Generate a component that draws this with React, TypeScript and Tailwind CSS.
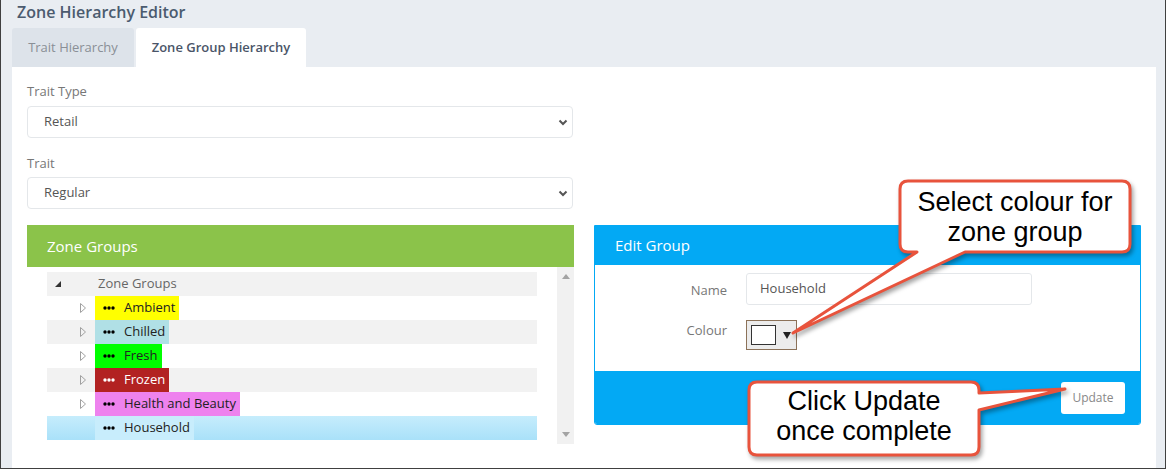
import React from 'react';

const Dots: React.FC<{ color?: string }> = ({ color = '#000' }) => (
  <svg width="12" height="4" viewBox="0 0 12 4" className="shrink-0">
    <circle cx="2" cy="2" r="1.7" fill={color} />
    <circle cx="6" cy="2" r="1.7" fill={color} />
    <circle cx="10" cy="2" r="1.7" fill={color} />
  </svg>
);

const Chevron: React.FC = () => (
  <svg width="10" height="7" viewBox="0 0 10 7" className="shrink-0">
    <path d="M1.5 1.5 L5 5 L8.5 1.5" fill="none" stroke="#555" strokeWidth="2" />
  </svg>
);

const groups = [
  { name: 'Ambient', bg: 'bg-[#ffff00]', text: 'text-[#222]', dots: '#000' },
  { name: 'Chilled', bg: 'bg-[#b0e0e6]', text: 'text-[#222]', dots: '#000' },
  { name: 'Fresh', bg: 'bg-[#00ff00]', text: 'text-[#222]', dots: '#000' },
  { name: 'Frozen', bg: 'bg-[#b22222]', text: 'text-white', dots: '#fff' },
  { name: 'Health and Beauty', bg: 'bg-[#ee82ee]', text: 'text-[#222]', dots: '#000' },
];

const App: React.FC = () => {
  return (
    <div className="relative w-[1167px] h-[470px] bg-white overflow-hidden font-['Open_Sans',sans-serif]">
      <div className="w-[1166px] h-[469px] border-l border-r border-b border-[#404040] bg-[#e9edf2] flex flex-col">
        {/* Title */}
        <div className="h-[28px] pl-[16px] pt-[1px] text-[16px] leading-[22px] font-semibold text-[#4b5b6f]">
          Zone Hierarchy Editor
        </div>

        {/* Tabs */}
        <div className="flex pl-[11px] gap-[2px] h-[39px]">
          <div className="w-[122px] flex items-center justify-center rounded-t-[3px] bg-[#dde3ea] text-[13px] text-[#8a8f96]">
            Trait Hierarchy
          </div>
          <div className="w-[170px] flex items-center justify-center rounded-t-[3px] bg-white text-[13px] font-semibold text-[#4a5568]">
            Zone Group Hierarchy
          </div>
        </div>

        {/* Content */}
        <div className="flex-1 ml-[11px] w-[1144px] bg-white pl-[15px] pt-[14px]">
          <div className="text-[13px] leading-[20px] text-[#777]">Trait Type</div>
          <div className="mt-[5px] w-[546px] h-[32px] border border-[#e4e7ea] rounded-[4px] flex items-center justify-between pl-[16px] pr-[4px] text-[13px] text-[#555]">
            <span>Retail</span>
            <Chevron />
          </div>
          <div className="mt-[15px] text-[13px] leading-[20px] text-[#777]">Trait</div>
          <div className="mt-[4px] w-[546px] h-[32px] border border-[#e4e7ea] rounded-[4px] flex items-center justify-between pl-[16px] pr-[4px] text-[13px] text-[#555]">
            <span>Regular</span>
            <Chevron />
          </div>

          <div className="mt-[16px] flex gap-[20px]">
            {/* Zone Groups panel */}
            <div className="w-[547px]">
              <div className="h-[42px] bg-[#8bc34a] px-[20px] flex items-center text-[15px] text-white">
                Zone Groups
              </div>
              <div className="flex h-[177px]">
                <div className="pl-[20px] pt-[5px] w-[510px]">
                  <div className="w-[490px] h-[24px] bg-[#f2f2f2] flex items-center text-[13px] text-[#666]">
                    <svg width="6" height="6" viewBox="0 0 6 6" className="ml-[8px]">
                      <polygon points="6,0 6,6 0,6" fill="#333" />
                    </svg>
                    <span className="ml-[37px]">Zone Groups</span>
                  </div>
                  {groups.map((g, i) => (
                    <div
                      key={g.name}
                      className={`w-[490px] h-[24px] flex items-center ${i % 2 === 1 ? 'bg-[#f2f2f2]' : 'bg-white'}`}
                    >
                      <svg width="6" height="10" viewBox="0 0 6 10" className="ml-[33px]">
                        <polygon points="0.5,0.5 5.5,5 0.5,9.5" fill="none" stroke="#a0a0a0" strokeWidth="1" />
                      </svg>
                      <div className={`ml-[9px] h-[24px] flex items-center pl-[8px] pr-[4px] gap-[9px] text-[13px] ${g.bg} ${g.text}`}>
                        <Dots color={g.dots} />
                        <span>{g.name}</span>
                      </div>
                    </div>
                  ))}
                  <div className="w-[490px] h-[24px] flex items-center bg-gradient-to-b from-[#c6edfc] to-[#a9e1f9]">
                    <div className="ml-[48px] h-[24px] flex items-center pl-[8px] pr-[4px] gap-[9px] text-[13px] text-[#222] bg-[#c8edfc]">
                      <Dots />
                      <span>Household</span>
                    </div>
                  </div>
                </div>
                <div className="ml-[20px] w-[17px] bg-[#f1f1f1] flex flex-col items-center justify-between py-[7px]">
                  <svg width="8" height="5" viewBox="0 0 8 5">
                    <polygon points="4,0 8,5 0,5" fill="#a3a3a3" />
                  </svg>
                  <svg width="8" height="5" viewBox="0 0 8 5">
                    <polygon points="0,0 8,0 4,5" fill="#a3a3a3" />
                  </svg>
                </div>
              </div>
            </div>

            {/* Edit Group panel */}
            <div className="w-[547px] self-start border border-[#03a9f4] rounded-b-[3px] overflow-hidden">
              <div className="h-[39px] bg-[#03a9f4] px-[20px] flex items-center text-[15px] text-white">
                Edit Group
              </div>
              <div className="bg-white pt-[8px] pb-[21px]">
                <div className="flex items-start">
                  <div className="w-[132px] mt-[7px] text-right text-[13px] leading-[20px] text-[#777]">Name</div>
                  <div className="ml-[19px] w-[286px] h-[32px] border border-[#e4e7ea] rounded-[3px] flex items-center pl-[13px] text-[13px] text-[#555]">
                    Household
                  </div>
                </div>
                <div className="flex items-start mt-[15px]">
                  <div className="w-[132px] text-right text-[13px] leading-[20px] text-[#777]">Colour</div>
                  <div className="ml-[19px] w-[51px] h-[30px] border border-[#8c7259] bg-[#ececec] flex items-center pl-[4px] gap-[7px]">
                    <div className="w-[25px] h-[20px] border border-[#333] bg-white" />
                    <svg width="8" height="7" viewBox="0 0 8 7">
                      <polygon points="0,0 8,0 4,7" fill="#222" />
                    </svg>
                  </div>
                </div>
              </div>
              <div className="h-[53px] bg-[#03a9f4] flex items-center justify-end pr-[15px]">
                <div className="w-[64px] h-[32px] bg-white rounded-[3px] flex items-center justify-center text-[12px] text-[#888]">
                  Update
                </div>
              </div>
            </div>
          </div>
        </div>
      </div>

      {/* Callouts */}
      <svg
        className="absolute left-0 top-0 pointer-events-none drop-shadow-[2px_3px_2px_rgba(0,0,0,0.35)]"
        width="1167"
        height="470"
        viewBox="0 0 1167 470"
      >
        <path
          d="M 908 181 H 1122 Q 1130 181 1130 189 V 244 Q 1130 252 1122 252 H 965 L 793 333 L 917 252 H 908 Q 900 252 900 244 V 189 Q 900 181 908 181 Z"
          fill="#fff"
          stroke="#e8533c"
          strokeWidth="3"
          strokeLinejoin="round"
        />
        <path
          d="M 757 382 H 971 Q 979 382 979 390 V 393 L 1065 389 L 979 410 V 447 Q 979 455 971 455 H 757 Q 749 455 749 447 V 390 Q 749 382 757 382 Z"
          fill="#fff"
          stroke="#e8533c"
          strokeWidth="3"
          strokeLinejoin="round"
        />
      </svg>
      <div className="absolute left-[900px] top-[181px] w-[230px] h-[71px] flex flex-col items-center justify-center text-center text-[27px] leading-[30px] text-black font-['Liberation_Sans',Arial,sans-serif]">
        <span>Select colour for</span>
        <span>zone group</span>
      </div>
      <div className="absolute left-[749px] top-[380px] w-[230px] h-[71px] flex flex-col items-center justify-center text-center text-[27px] leading-[30px] text-black font-['Liberation_Sans',Arial,sans-serif]">
        <span>Click Update</span>
        <span>once complete</span>
      </div>
    </div>
  );
};

export default App;
